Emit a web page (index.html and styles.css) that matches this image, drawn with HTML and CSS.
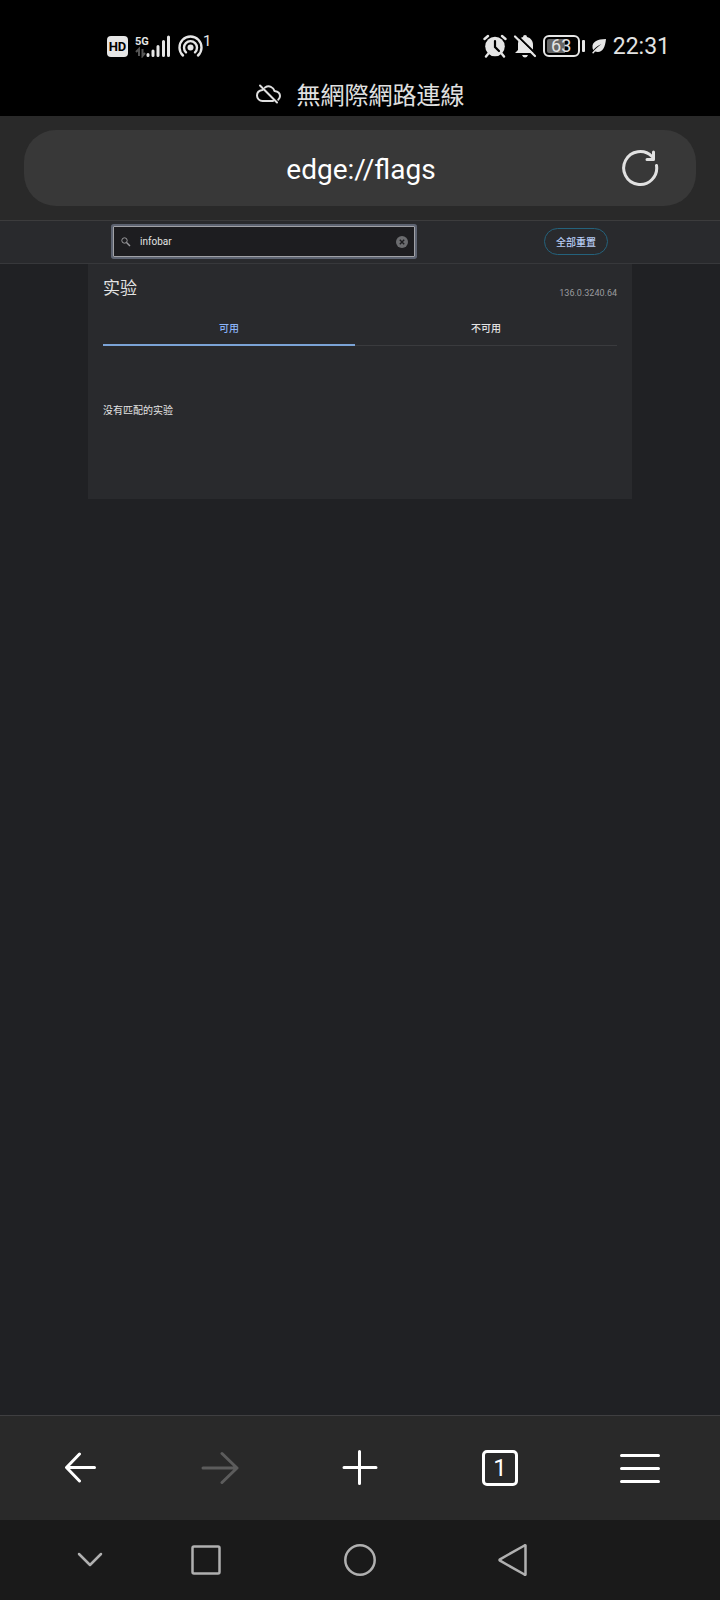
FILE: index.html
```html
<!DOCTYPE html>
<html lang="zh-CN">
<head>
<meta charset="utf-8">
<meta name="viewport" content="width=device-width, initial-scale=1">
<title>edge://flags</title>
<link rel="stylesheet" href="styles.css">
</head>
<body>
<header class="status">
  <div class="status-row">
    <div class="status-group">
      <span class="hd">HD</span>
      <svg width="36" height="24" viewBox="0 0 36 24" aria-label="5G">
        <text x="0" y="11" class="net">5G</text>
        <path d="M4 22V15L1 18M7.500 15v7l2.500-3" stroke="#555" stroke-width="2" fill="none"/>
        <path d="M13 20.500v1M18 17v4.500M23 12.500v9M28.500 7.500v14M33.500 3v18.500" stroke="#e6e6e6" stroke-width="3" stroke-linecap="round"/>
      </svg>
      <span class="hotspot">
        <svg width="25" height="24" viewBox="0 0 25 24" aria-label="热点">
          <g fill="none" stroke="#e6e6e6" stroke-width="2.400" stroke-linecap="round">
            <path d="M5 21.500a11 11 0 1 1 15 0"/>
            <path d="M8 18.300a6.500 6.500 0 1 1 9 0"/>
          </g>
          <circle cx="12.500" cy="13.500" r="3" fill="#e6e6e6"/>
        </svg>
        <span class="count">1</span>
      </span>
    </div>
    <div class="status-group status-right">
      <svg width="24" height="24" viewBox="0 0 24 24" aria-label="闹钟">
        <circle cx="12" cy="12.500" r="9.800" fill="#e6e6e6"/>
        <path d="M1.500 5L5 2M22.500 5L19 2M5 20l-2 2.500M19 20l2 2.500" stroke="#e6e6e6" stroke-width="2.400" stroke-linecap="round"/>
        <path d="M12 7v6l4 4" stroke="#000" stroke-width="2.200" fill="none" stroke-linecap="round"/>
      </svg>
      <svg width="24" height="24" viewBox="0 0 24 24" aria-label="静音">
        <path d="M10 3a2 2 0 0 1 4 0c4 1 6 4 6 8v5l2 3H2l3-3v-5c0-4 1-7 5-8z" fill="#e6e6e6"/>
        <path d="M9 21h6q-1 2.500-3 2.500T9 21z" fill="#e6e6e6"/>
        <path d="M3 0.500L24 21" stroke="#000" stroke-width="2"/>
        <path d="M2 2.500L22 22" stroke="#e6e6e6" stroke-width="2.200" stroke-linecap="round"/>
      </svg>
      <span class="battery"><span class="level">63</span></span>
      <svg width="16" height="16" viewBox="0 0 16 16" aria-label="省电">
        <path d="M15 1C6 1 1 4 1.500 9.500c0 1 .3 1.800.8 2.500C5 9 7 7.500 10.500 6 7 8.500 4 11 1 15l1.500.5L4 13.500c7 2 10-3 11-12.500z" fill="#e6e6e6"/>
      </svg>
      <time class="clock">22:31</time>
    </div>
  </div>
  <div class="notice">
    <svg width="25" height="20" viewBox="0 0 25 20" fill="none" stroke="#e0e0e0" stroke-width="2" stroke-linecap="round" stroke-linejoin="round" aria-hidden="true">
      <path d="M6.500 6C3 6.500 1 9 1 11.500 1 14.500 3.500 17 6.500 17H17M9 3.500C13 1 17.500 3 18.500 7c3.500.5 5.500 2.500 5.500 5 0 1.500-.7 2.800-1.800 3.700M4 1.500L21 18.500"/>
    </svg>
    <span>無網際網路連線</span>
  </div>
</header>

<div class="address-bar">
  <div class="address-pill">
    <span class="url">edge://flags</span>
    <button class="reload" aria-label="刷新">
      <svg width="38" height="38" viewBox="0 0 38 38" fill="none" stroke="#e1e1e1" stroke-width="3" stroke-linecap="round" stroke-linejoin="round">
        <path d="M35.500 16.500A16.500 16.500 0 1 1 31 7.500"/>
        <path d="M32.500 3v7.500H26"/>
      </svg>
    </button>
  </div>
</div>

<main class="page">
  <div class="flags-header">
    <div class="search">
      <svg width="10" height="10" viewBox="0 0 10 10" fill="none" stroke="#9a9a9d" aria-hidden="true">
        <circle cx="3.500" cy="3.500" r="2.700"/><path d="M5.500 5.500L9 9" stroke-width="1.400"/>
      </svg>
      <input type="text" value="infobar" aria-label="搜索实验">
      <button class="clear" aria-label="清除">
        <svg width="12" height="12" viewBox="0 0 12 12"><circle cx="6" cy="6" r="6" fill="#6b6c6f"/><path d="M3.800 3.800l4.400 4.400M8.200 3.800L3.800 8.200" stroke="#1d1d20" stroke-width="1.400"/></svg>
      </button>
    </div>
    <button class="reset">全部重置</button>
  </div>
  <section class="panel">
    <div class="heading">
      <h1>实验</h1>
      <span class="version">136.0.3240.64</span>
    </div>
    <div class="tabs" role="tablist">
      <button class="tab selected" role="tab" aria-selected="true">可用</button>
      <button class="tab" role="tab" aria-selected="false">不可用</button>
    </div>
    <p class="empty">没有匹配的实验</p>
  </section>
</main>

<nav class="toolbar">
  <button aria-label="后退"><svg width="32" height="32" viewBox="0 0 32 32"><path d="M30.500 15.500H3M15.500 2L2.500 15.500l13 13.500"/></svg></button>
  <button aria-label="前进" class="dim" disabled><svg width="38" height="38" viewBox="0 0 38 38"><path d="M2 19h34M21 4.500L36 19 21 33.500"/></svg></button>
  <button aria-label="新建标签页"><svg width="36" height="36" viewBox="0 0 36 36"><path d="M2 17.500h32M17.500 1.500v32"/></svg></button>
  <button aria-label="标签页"><span class="tab-count">1</span></button>
  <button aria-label="菜单"><svg width="40" height="32" viewBox="0 0 40 32"><path d="M1.500 3.500h37M1.500 16.500h37M1.500 29.500h37"/></svg></button>
</nav>

<nav class="system-nav">
  <button aria-label="收起" class="collapse"><svg width="26" height="16" viewBox="0 0 26 16"><path d="M2 2l11 11L24 2"/></svg></button>
  <button aria-label="最近任务"><svg width="30" height="30" viewBox="0 0 30 30"><rect x="1.500" y="1.500" width="27" height="27" rx="1.500"/></svg></button>
  <button aria-label="主页"><svg width="32" height="32" viewBox="0 0 32 32"><circle cx="16" cy="16" r="14.700"/></svg></button>
  <button aria-label="返回"><svg width="32" height="32" viewBox="0 0 32 32"><path d="M27.500 1.500v29Q27 31 26.500 30.500L2 16.700Q1 16 2 15.300L26.500 1.500Q27 1 27.500 1.500z"/></svg></button>
</nav>
</body>
</html>
```
FILE: styles.css
```css
* { box-sizing: border-box; }

body {
  margin: 0;
  min-height: 100vh;
  display: flex;
  flex-direction: column;
  background: #202124;
  color: #e3e3e3;
  font-family: Roboto, "Noto Sans CJK SC", sans-serif;
}

button {
  display: flex;
  align-items: center;
  justify-content: center;
  padding: 0;
  border: 0;
  background: none;
  color: inherit;
  font: inherit;
}

svg { display: block; flex: none; }

.status {
  padding-top: 28px;
  height: 116px;
  background: #000;
}
.status-row {
  display: flex;
  align-items: center;
  justify-content: space-between;
  height: 36px;
  padding: 0 50px 0 107px;
}
.status-group { display: flex; align-items: center; gap: 7px; }
.status-right { gap: 6px; }
.hd {
  width: 21px;
  border-radius: 4px;
  background: #e6e6e6;
  color: #000;
  font-size: 13px;
  font-weight: 700;
  line-height: 21px;
  text-align: center;
}
.net { fill: #e6e6e6; font: 700 11px Roboto, sans-serif; }
.hotspot { display: flex; align-items: flex-start; }
.count { color: #e6e6e6; font-size: 15px; line-height: 15px; }
.battery { display: flex; align-items: center; }
.battery::after {
  content: "";
  width: 3px;
  height: 12px;
  margin-left: 2px;
  border-radius: 1px;
  background: #e6e6e6;
}
.level {
  width: 37px;
  height: 22px;
  border: 2px solid #e6e6e6;
  border-radius: 6px;
  background: linear-gradient(90deg, #666 62%, transparent 62%) content-box;
  padding: 2px;
  font-size: 18px;
  line-height: 14px;
  text-align: center;
}
.clock { font-size: 23px; line-height: 32px; padding-top: 2px; }

.notice {
  display: flex;
  align-items: center;
  justify-content: center;
  gap: 16px;
  height: 60px;
  color: #e0e0e0;
  font-family: "Noto Sans CJK TC", sans-serif;
  font-size: 24px;
  line-height: 36px;
}

.address-bar {
  padding: 14px 24px;
  border-bottom: 1px solid #3c3c3d;
  background: #292929;
}
.address-pill {
  display: grid;
  grid-template-columns: 76px 1fr 76px;
  align-items: center;
  height: 76px;
  padding-right: 18px;
  border-radius: 32px;
  background: #383838;
}
.url {
  grid-column: 2;
  padding: 3px 0 0 20px;
  color: #fff;
  font-size: 28px;
  text-align: center;
}

.page { flex: 1; }
.flags-header {
  display: flex;
  align-items: center;
  justify-content: space-between;
  height: 43px;
  padding: 0 112px 1px 113px;
  border-bottom: 1px solid #37383b;
  background: #292a2d;
}
.search {
  display: flex;
  align-items: center;
  width: 61%;
  height: 31px;
  padding: 0 6px 0 7px;
  border: 1px solid #a0a1a6;
  border-radius: 1px;
  background: #1d1d20;
  box-shadow: 0 0 0 2px #5d6371;
}
.search input {
  flex: 1;
  min-width: 0;
  padding: 0 9px;
  border: 0;
  outline: 0;
  background: none;
  color: #e3e3e3;
  font: inherit;
  font-size: 10px;
}
.reset {
  height: 27px;
  padding: 0 11px;
  border: 1px solid #24627c;
  border-radius: 14px;
  color: #b8cdf5;
  font-size: 10px;
  font-weight: 500;
}

.panel {
  max-width: 544px;
  min-height: 235px;
  margin: 0 auto;
  padding: 9px 15px;
  background: #292a2d;
}
.heading {
  display: flex;
  align-items: center;
  justify-content: space-between;
  height: 29px;
}
h1 { margin: 0; font-size: 17px; font-weight: 400; line-height: 28px; }
.version { padding-top: 10px; color: #9a9b9e; font-size: 9px; }
.tabs {
  display: grid;
  grid-template-columns: 49fr 51fr;
  height: 44px;
  border-bottom: 1px solid #3a3b3e;
}
.tab { padding-top: 9px; height: 44px; border-bottom: 2px solid transparent; font-size: 10px; font-weight: 500; }
.tab.selected { border-color: #7ba3d6; color: #8ab4f8; }
.empty { margin: 57px 0 0; font-size: 10px; line-height: 16px; }

.toolbar {
  display: grid;
  grid-template-columns: repeat(5, 1fr);
  height: 105px;
  padding: 0 10px;
  border-top: 1px solid #3f3f41;
  background: #292929;
}
.toolbar svg, .system-nav svg {
  fill: none;
  stroke: #fff;
  stroke-width: 3;
  stroke-linecap: round;
  stroke-linejoin: round;
}
.toolbar .dim svg { stroke: #5c5c5c; }
.tab-count {
  width: 36px;
  border: 3px solid #fff;
  border-radius: 5px;
  color: #fff;
  font-size: 24px;
  font-weight: 400;
  line-height: 30px;
  text-align: center;
}

.system-nav {
  display: grid;
  grid-template-columns: 129fr 154fr 154fr 154fr 129fr;
  height: 80px;
  background: #1a1a1a;
}
.system-nav svg { stroke: #b0b0b0; stroke-width: 2.5; }
.collapse { padding-left: 40%; }
```
